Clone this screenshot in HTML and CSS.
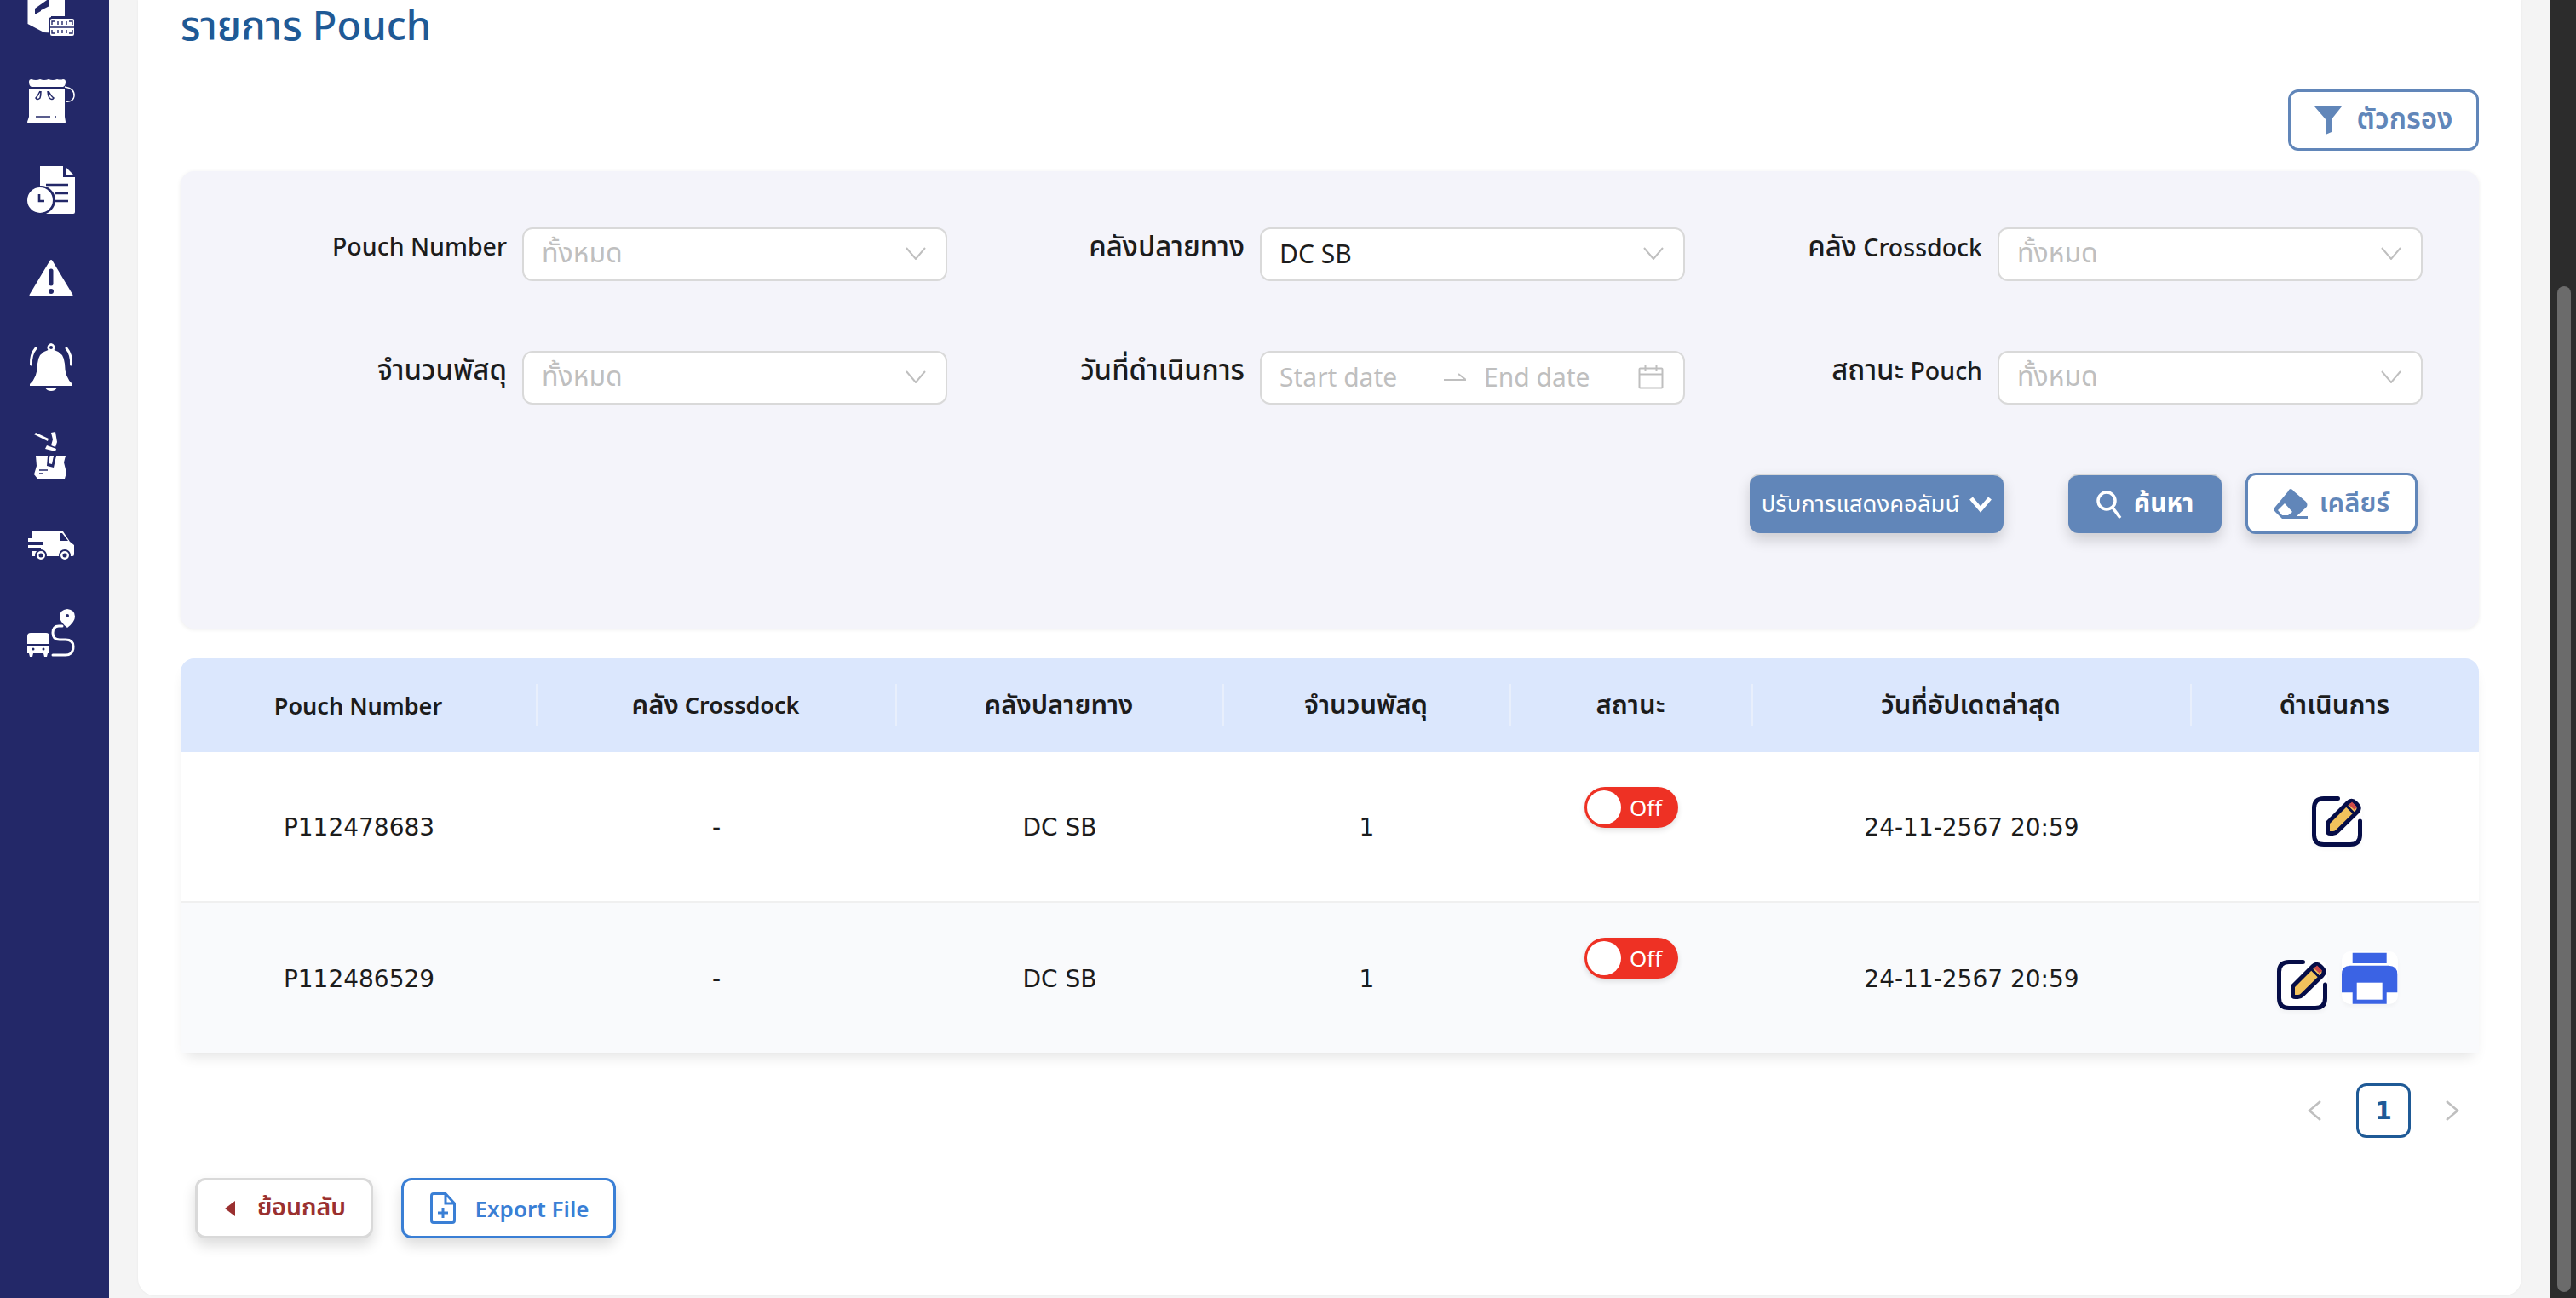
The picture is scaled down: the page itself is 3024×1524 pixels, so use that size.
FILE: index.html
```html
<!DOCTYPE html>
<html lang="th">

<head>
  <meta charset="UTF-8">
  <title>รายการ Pouch</title>
  <link rel="stylesheet" href="styles.css">
</head>

<body>
  <div class="app">
    <nav class="sidebar">
      <ul class="side-list">
        <li class="side-item">
          <svg class="side-icon" viewBox="0 0 60 60">
            <path fill="#fff" d="M2.500 0H46V34H30V53.500L21.600 53L2.500 43Z" />
            <path fill="#232868" d="M28 13L11 25V32L18 28V27L28 22Z" />
            <rect x="28" y="36" width="30" height="22" rx="3" fill="#fff" stroke="#232868" stroke-width="2" />
            <path fill="none" stroke="#232868" stroke-width="1.400" d="M31 44V40H35M55 44V40H51M31 50V54H35M55 50V54H51M38 44V40M43 44V40M48 44V40M38 50V54M43 50V54M48 50V54" />
            <path stroke="#232868" stroke-width="1.500" d="M29 47H57" />
          </svg>
        </li>
        <li class="side-item">
          <svg class="side-icon" viewBox="0 0 60 60">
            <path fill="#fff" d="M4 7Q4 4 7 4Q12 6 17 4Q22 6 27 4Q32 6 37 4Q41 5 44 4Q47 4 47 7Q47 12 44 13H7Q4 12 4 7Z" />
            <path fill="#fff" d="M4 15H46V48L47 54Q47 56 44 56H5Q2 56 2 54L4 48Z" />
            <path fill="none" stroke="#232868" stroke-width="1.500" d="M17 18Q14 24 12 26Q14 29 17 26Q18 23 18 18M27 18Q30 24 33 26Q31 29 28 26Q26 23 26 18" />
            <path stroke="#232868" stroke-width="1.500" d="M12 48H29M34 48H36" />
            <path fill="none" stroke="#fff" stroke-width="1.500" d="M46 13Q58 15 57 24Q56 31 47 30" />
          </svg>
        </li>
        <li class="side-item">
          <svg class="side-icon" viewBox="0 0 60 60">
            <path fill="#fff" d="M17 2H44V15H58V56Q58 58 56 58H17Z" />
            <path fill="#fff" d="M47 3L57 13H47Z" />
            <path stroke="#232868" stroke-width="2.600" d="M24 24H50M34 34H50M34 43H50" />
            <circle cx="18" cy="42" r="17" fill="#232868" />
            <circle cx="17" cy="42" r="15" fill="#fff" />
            <path fill="none" stroke="#232868" stroke-width="2.600" d="M16 35V43H22" />
          </svg>
        </li>
        <li class="side-item">
          <svg class="side-icon" viewBox="0 0 60 60">
            <path fill="#fff" stroke="#fff" stroke-width="3" stroke-linejoin="round" d="M30 9.500L6 49.500H54Z" />
            <path stroke="#232868" stroke-width="5" stroke-linecap="round" d="M30 21V36" />
            <circle cx="30" cy="45" r="3" fill="#232868" />
          </svg>
        </li>
        <li class="side-item">
          <svg class="side-icon" viewBox="0 0 60 60">
            <path fill="#fff" d="M30 2A5 5 0 0 1 33.500 10Q45 13 46 26Q46 42 55 50V52H5V50Q14 42 14 26Q15 13 26.500 10A5 5 0 0 1 30 2Z" />
            <circle cx="30" cy="7" r="2" fill="#232868" />
            <path fill="#fff" d="M23 54H37Q35 58 30 58Q25 58 23 54Z" />
            <path fill="none" stroke="#fff" stroke-width="3" stroke-linecap="round" d="M12 8Q6 15 6.500 27M48 8Q54 15 53.500 27" />
          </svg>
        </li>
        <li class="side-item">
          <svg class="side-icon" viewBox="0 0 60 60">
            <path fill="#fff" d="M10 5L12 3L27 10L26 13Z" />
            <path fill="#fff" d="M30 3L35 2L37 14L35 20L30 18L32 11Z" />
            <path fill="#fff" d="M25 18L36 22L35 25L23 22Z" />
            <path fill="#fff" d="M12 30H47L45 38L48 50L46 57H14L10 52L13 42Z" />
            <path fill="#232868" d="M26 30H36L33 44L25 42Z" />
            <path fill="#fff" d="M28.500 30H33L31 40L27 39Z" />
            <path stroke="#232868" stroke-width="1.400" d="M16 47H26M16 51H21" />
          </svg>
        </li>
        <li class="side-item">
          <svg class="side-icon" viewBox="0 0 60 60">
            <path fill="#fff" d="M8 14H40L41 15H44L52 27L57 31V42Q57 44 55 44H8V38H18V34H3V31H20V27H3V23H8Z" />
            <path fill="#232868" d="M43 17H41V26H50Z" />
            <circle cx="18" cy="43" r="6" fill="#fff" stroke="#232868" stroke-width="2" />
            <circle cx="46" cy="43" r="6" fill="#fff" stroke="#232868" stroke-width="2" />
            <circle cx="18" cy="43" r="2.500" fill="#232868" />
            <circle cx="46" cy="43" r="2.500" fill="#232868" />
          </svg>
        </li>
        <li class="side-item">
          <svg class="side-icon" viewBox="0 0 60 60">
            <path fill="#fff" d="M49 2Q58 3 58 11Q58 17 49 24Q40 17 40 11Q40 3 49 2Z" />
            <circle cx="49" cy="10" r="2" fill="#232868" />
            <path fill="#fff" d="M2 34Q2 30 6 30H24Q28 30 28 34V43H2ZM2 45H28V54H26L25 58H22L21 54H9L8 58H5L4 54H2Z" />
            <circle cx="9" cy="49" r="1.500" fill="#232868" />
            <circle cx="21" cy="49" r="1.500" fill="#232868" />
            <path fill="none" stroke="#fff" stroke-width="3" stroke-linecap="round" d="M43 22H39Q32 22 32 30Q32 38 40 38H47Q56 38 56 46Q56 56 47 56H32" />
          </svg>
        </li>
      </ul>
    </nav>

    <main class="main">
      <section class="card">
        <h1 class="title">รายการ Pouch</h1>

        <div class="filter-bar">
          <button class="btn btn-outline btn-filter">
            <svg class="btn-icon" width="32" height="33" viewBox="0 0 32 33">
              <path fill="currentColor" d="M0 0H32L20 15V30L13 33V15Z" />
            </svg>
            ตัวกรอง
          </button>
        </div>

        <div class="panel">
          <div class="fields">
            <div class="field">
              <label class="field-label">Pouch Number</label>
              <div class="select placeholder">
                <span class="th">ทั้งหมด</span>
                <svg class="caret" width="24" height="15" viewBox="0 0 24 15"><path d="M1 1L12 14L23 1" /></svg>
              </div>
            </div>
            <div class="field">
              <label class="field-label"><span class="th">คลังปลายทาง</span></label>
              <div class="select">
                <span>DC SB</span>
                <svg class="caret" width="24" height="15" viewBox="0 0 24 15"><path d="M1 1L12 14L23 1" /></svg>
              </div>
            </div>
            <div class="field">
              <label class="field-label"><span class="th">คลัง</span> Crossdock</label>
              <div class="select placeholder">
                <span class="th">ทั้งหมด</span>
                <svg class="caret" width="24" height="15" viewBox="0 0 24 15"><path d="M1 1L12 14L23 1" /></svg>
              </div>
            </div>
            <div class="field">
              <label class="field-label"><span class="th">จำนวนพัสดุ</span></label>
              <div class="select placeholder">
                <span class="th">ทั้งหมด</span>
                <svg class="caret" width="24" height="15" viewBox="0 0 24 15"><path d="M1 1L12 14L23 1" /></svg>
              </div>
            </div>
            <div class="field">
              <label class="field-label"><span class="th">วันที่ดำเนินการ</span></label>
              <div class="select placeholder date-range">
                <span class="date-from">Start date</span>
                <svg class="date-arrow" width="26" height="12" viewBox="0 0 26 12"><path d="M0 9H26M17 2L26 9" /></svg>
                <span class="date-to">End date</span>
                <svg class="date-cal" width="30" height="28" viewBox="0 0 30 28">
                  <rect x="1.500" y="3.500" width="27" height="23" rx="1" />
                  <path d="M1.500 10.500H28.500M8.500 0V7M21.500 0V7" />
                </svg>
              </div>
            </div>
            <div class="field">
              <label class="field-label"><span class="th">สถานะ</span> Pouch</label>
              <div class="select placeholder">
                <span class="th">ทั้งหมด</span>
                <svg class="caret" width="24" height="15" viewBox="0 0 24 15"><path d="M1 1L12 14L23 1" /></svg>
              </div>
            </div>
          </div>

          <div class="panel-actions">
            <button class="btn btn-solid btn-columns">
              ปรับการแสดงคอลัมน์
              <svg width="26" height="20" viewBox="0 0 26 20"><path fill="none" stroke="currentColor" stroke-width="5" d="M2 3L13 16L24 3" /></svg>
            </button>
            <button class="btn btn-solid btn-search">
              <svg width="30" height="33" viewBox="0 0 30 33"><circle cx="12" cy="12" r="10" fill="none" stroke="currentColor" stroke-width="3.500" /><path stroke="currentColor" stroke-width="3.500" d="M19 20L28 32" /></svg>
              ค้นหา
            </button>
            <button class="btn btn-outline btn-clear">
              <svg width="40" height="35" viewBox="0 0 40 35">
                <path fill="currentColor" d="M20 0Q22 0 24 3L38 15Q41 19 38 22L27 32H40V35H10L2 27Q-1 24 2 21L17 3Q18 0 20 0Z" />
                <path fill="#fff" d="M13 17L22 27L17 31H10L5 25Z" />
              </svg>
              เคลียร์
            </button>
          </div>
        </div>

        <table class="pouch-table">
          <colgroup>
            <col class="col-number">
            <col class="col-cross">
            <col class="col-dest">
            <col class="col-count">
            <col class="col-status">
            <col class="col-date">
            <col class="col-action">
          </colgroup>
          <thead>
            <tr>
              <th>Pouch Number</th>
              <th><span class="th">คลัง</span> Crossdock</th>
              <th><span class="th">คลังปลายทาง</span></th>
              <th><span class="th">จำนวนพัสดุ</span></th>
              <th><span class="th">สถานะ</span></th>
              <th><span class="th">วันที่อัปเดตล่าสุด</span></th>
              <th><span class="th">ดำเนินการ</span></th>
            </tr>
          </thead>
          <tbody>
            <tr>
              <td>P112478683</td>
              <td>-</td>
              <td>DC SB</td>
              <td>1</td>
              <td class="cell-status"><span class="switch"><i class="switch-knob"></i>Off</span></td>
              <td>24-11-2567 20:59</td>
              <td class="cell-action">
                <div class="action-wrap">
                  <span class="icon-tile">
                    <svg width="59" height="59" viewBox="0 0 59 59">
                      <path class="edit-frame" d="M30.500 2.500H14Q2.500 2.500 2.500 14V45Q2.500 56.500 14 56.500H45Q56.500 56.500 56.500 45V29" />
                      <path class="edit-pencil" d="M18.500 31L42 7.500Q46.500 3 51 7.500L53 9.500Q57.500 14 53 18.500L29.500 41.500Q27.500 43.500 24.500 43.500H21.500Q18.500 43.500 18.500 40.500Z" />
                      <path class="edit-band" d="M41 11.500L49.500 20" />
                      <path fill="#cf4a4a" d="M43.500 10L47 6.500L53 12.500L50 16Z" />
                    </svg>
                  </span>
                </div>
              </td>
            </tr>
            <tr>
              <td>P112486529</td>
              <td>-</td>
              <td>DC SB</td>
              <td>1</td>
              <td class="cell-status"><span class="switch"><i class="switch-knob"></i>Off</span></td>
              <td>24-11-2567 20:59</td>
              <td class="cell-action">
                <div class="action-wrap action-wrap-two">
                  <span class="icon-tile icon-tile-edit">
                    <svg width="59" height="59" viewBox="0 0 59 59">
                      <path class="edit-frame" d="M30.500 2.500H14Q2.500 2.500 2.500 14V45Q2.500 56.500 14 56.500H45Q56.500 56.500 56.500 45V29" />
                      <path class="edit-pencil" d="M18.500 31L42 7.500Q46.500 3 51 7.500L53 9.500Q57.500 14 53 18.500L29.500 41.500Q27.500 43.500 24.500 43.500H21.500Q18.500 43.500 18.500 40.500Z" />
                      <path class="edit-band" d="M41 11.500L49.500 20" />
                      <path fill="#cf4a4a" d="M43.500 10L47 6.500L53 12.500L50 16Z" />
                    </svg>
                  </span>
                  <span class="icon-tile">
                    <svg width="66" height="62" viewBox="0 0 66 62">
                      <path fill="#3b63e4" d="M12.700 1.700H52.700V14H12.700Z" />
                      <path fill="#3b63e4" d="M10 16.700H55Q65.300 16.700 65.300 27V48.300H52.700V61.700H12.700V48.300H0V27Q0 16.700 10 16.700Z" />
                      <path fill="#fff" d="M17.700 36.700H47.700V56.700H17.700Z" />
                    </svg>
                  </span>
                </div>
              </td>
            </tr>
          </tbody>
        </table>

        <div class="pager">
          <svg class="pager-arrow" width="16" height="24" viewBox="0 0 16 24"><path d="M15 1L2 12L15 23" /></svg>
          <span class="pager-num">1</span>
          <svg class="pager-arrow" width="16" height="24" viewBox="0 0 16 24"><path d="M1 1L14 12L1 23" /></svg>
        </div>

        <div class="foot-actions">
          <button class="btn btn-back">
            <svg width="12" height="18" viewBox="0 0 12 18"><path fill="currentColor" d="M12 0V18L0 9Z" /></svg>
            <span class="th">ย้อนกลับ</span>
          </button>
          <button class="btn btn-export">
            <svg width="30" height="37" viewBox="0 0 30 37">
              <path fill="none" stroke="currentColor" stroke-width="3" stroke-linejoin="round" d="M4 1.500H18L28.500 13V33Q28.500 35.500 26 35.500H4Q1.500 35.500 1.500 33V4Q1.500 1.500 4 1.500Z" />
              <path fill="none" stroke="currentColor" stroke-width="3" d="M18 2V13H28M15 18V30M9 24H21" />
            </svg>
            Export File
          </button>
        </div>
      </section>
    </main>

    <div class="scroll-track">
      <div class="scroll-thumb"></div>
    </div>
  </div>
</body>

</html>
```

FILE: styles.css
```css
* {
  padding: 0;
  margin: 0;
  box-sizing: border-box;
}

body {
  font-family: "Noto Sans", "Noto Sans Thai", "DejaVu Sans", sans-serif;
  color: #1c1c1c;
  background: #f4f4f4;
}

.app {
  display: flex;
  height: 1524px;
  overflow: hidden;
}

/* sidebar, scrolled so the first icon is cut off */
.sidebar {
  flex: 0 0 128px;
  background: #232868;
  overflow: hidden;
}

.side-list {
  list-style: none;
  margin-top: -37px;
}

.side-item {
  display: flex;
  align-items: center;
  justify-content: center;
  height: 104px;
  padding-right: 8px;
}

.side-icon {
  width: 60px;
  height: 60px;
}

.main {
  flex: 1;
  padding: 0 34px 3px;
  background: #f4f4f4;
}

.card {
  height: 100%;
  padding: 0 50px;
  background: #fff;
  border-radius: 0 0 20px 20px;
  box-shadow: 0 0 3px rgba(0, 0, 0, .05);
}

.title {
  height: 50px;
  font-size: 47px;
  line-height: 58px;
  font-weight: 500;
  color: #1f5a96;
}

.filter-bar {
  display: flex;
  justify-content: flex-end;
  margin-top: 55px;
}

/* buttons */
.btn {
  display: inline-flex;
  align-items: center;
  justify-content: center;
  font-family: inherit;
  font-size: 30px;
  font-weight: 600;
  border-radius: 12px;
  cursor: pointer;
}

.btn-outline {
  color: #6186b9;
  background: #fff;
  border: 3px solid #6186b9;
}

.btn-solid {
  color: #fff;
  background: #6186b9;
  border: 0;
  border-top: 2px solid #d9d9d9;
}

.btn-filter {
  width: 224px;
  height: 72px;
  gap: 18px;
  font-size: 33px;
}

.panel {
  height: 537px;
  margin-top: 24px;
  padding: 66px 0 0 34px;
  background: #f4f4fa;
  border-radius: 16px;
  box-shadow: 0 1px 5px rgba(0, 0, 0, .08);
}

.fields {
  display: grid;
  grid-template-columns: repeat(3, 866px);
  row-gap: 82px;
}

.field {
  display: flex;
  gap: 18px;
}

.field-label {
  flex: 1;
  text-align: right;
  font-size: 28.500px;
  font-weight: 500;
  line-height: 44px;
}

.field-label .th {
  font-size: 33px;
}

.select {
  display: flex;
  align-items: center;
  justify-content: space-between;
  flex: 0 0 499px;
  height: 63px;
  padding: 0 23px 2px 21px;
  font-size: 30px;
  background: #fff;
  border: 2px solid #d9d9d9;
  border-radius: 12px;
}

.select .th {
  font-size: 32px;
}

.placeholder {
  color: #bfbfbf;
}

.caret path {
  fill: none;
  stroke: #bfbfbf;
  stroke-width: 2;
}

.date-range {
  justify-content: flex-start;
}

.date-from {
  width: 193px;
}

.date-arrow {
  margin-right: 21px;
}

.date-arrow path,
.date-cal rect,
.date-cal path {
  fill: none;
  stroke: #bfbfbf;
  stroke-width: 2;
}

.date-cal {
  margin-left: auto;
  margin-right: 0;
}

.panel-actions {
  display: flex;
  justify-content: flex-end;
  margin-top: 80px;
  padding-right: 72px;
}

.panel-actions .btn {
  box-shadow: 0 8px 16px rgba(0, 0, 0, .16);
}

.btn-columns {
  width: 298px;
  height: 70px;
  margin-top: 1px;
  gap: 12px;
  font-size: 27.500px;
  font-weight: 400;
}

.btn-search {
  width: 180px;
  height: 70px;
  margin-top: 1px;
  margin-left: 76px;
  gap: 14px;
  font-weight: 700;
}

.btn-clear {
  width: 202px;
  height: 72px;
  margin-left: 28px;
  gap: 14px;
  font-size: 31px;
}

/* table */
.pouch-table {
  width: 2698px;
  margin-top: 35px;
  border-collapse: separate;
  border-spacing: 0;
  table-layout: fixed;
  box-shadow: 0 10px 16px -6px rgba(0, 0, 0, .12);
  border-radius: 16px 16px 0 0;
}

.col-number { width: 417px; }
.col-cross { width: 422px; }
.col-dest { width: 384px; }
.col-count { width: 337px; }
.col-status { width: 284px; }
.col-date { width: 515px; }
.col-action { width: 339px; }

.pouch-table th {
  position: relative;
  height: 110px;
  font-size: 27px;
  font-weight: 600;
  background: #dbe7fd;
}

.pouch-table th .th {
  font-size: 31px;
}

.pouch-table th:first-child {
  border-top-left-radius: 16px;
}

.pouch-table th:last-child {
  border-top-right-radius: 16px;
}

.pouch-table th + th::before {
  content: "";
  position: absolute;
  left: 0;
  top: 30px;
  height: 49px;
  border-left: 2px solid #e8effc;
}

.pouch-table td {
  height: 177px;
  padding: 2px 0 0 2px;
  font-size: 28px;
  font-family: "DejaVu Sans", sans-serif;
  text-align: center;
  background: #fff;
  border-bottom: 2px solid #f0f0f0;
}

.pouch-table tbody tr:last-child td {
  height: 176px;
  background: #f9fafc;
  border-bottom: 0;
}

.pouch-table .cell-status {
  vertical-align: top;
  padding: 41px 0 0 2px;
}

.switch {
  display: inline-flex;
  align-items: center;
  gap: 10px;
  width: 110px;
  height: 48px;
  padding-left: 3px;
  font-family: "Noto Sans", sans-serif;
  font-size: 26px;
  color: #fff;
  background: #ee3124;
  border-radius: 24px;
  box-shadow: 0 3px 6px rgba(0, 0, 0, .12);
}

.switch-knob {
  width: 40px;
  height: 40px;
  background: #fff;
  border-radius: 50%;
}

.pouch-table .cell-action {
  vertical-align: top;
  padding: 0;
}

.action-wrap {
  display: flex;
  align-items: flex-start;
  justify-content: center;
  gap: 17px;
  padding: 52px 0 0 6px;
}

.action-wrap-two {
  padding-top: 57px;
}

.icon-tile {
  display: inline-flex;
  background: #fff;
  border-radius: 10px;
  box-shadow: 0 3px 4px rgba(0, 0, 0, .03);
}

.icon-tile-edit {
  margin-top: 10px;
}

.edit-frame {
  fill: none;
  stroke: #060d47;
  stroke-width: 5;
  stroke-linecap: round;
}

.edit-pencil {
  fill: #f2c25c;
  stroke: #060d47;
  stroke-width: 5;
  stroke-linejoin: round;
}

.edit-band {
  stroke: #060d47;
  stroke-width: 3;
}

/* pagination */
.pager {
  display: flex;
  align-items: center;
  justify-content: flex-end;
  gap: 41px;
  margin-top: 36px;
  padding-right: 23px;
}

.pager-arrow path {
  fill: none;
  stroke: #bfbfbf;
  stroke-width: 2.500;
}

.pager-num {
  display: flex;
  align-items: center;
  justify-content: center;
  width: 64px;
  height: 64px;
  font-family: "DejaVu Sans", sans-serif;
  font-size: 28px;
  font-weight: 700;
  color: #1f5a96;
  border: 3px solid #1f5a96;
  border-radius: 12px;
}

.foot-actions {
  display: flex;
  gap: 33px;
  margin-top: 47px;
  padding-left: 17px;
}

.foot-actions .btn {
  height: 71px;
  font-size: 26px;
  background: #fff;
  box-shadow: 0 8px 16px rgba(0, 0, 0, .14);
}

.foot-actions .th {
  font-size: 28.500px;
}

.btn-back {
  width: 209px;
  gap: 26px;
  padding-left: 3px;
  color: #9a3030;
  border: 3px solid #d9d9d9;
}

.btn-export {
  width: 252px;
  gap: 23px;
  padding-left: 2px;
  color: #3a7fd5;
  border: 3px solid #3a7fd5;
}

.scroll-track {
  flex: 0 0 30px;
  padding: 336px 6px 7px 8px;
  background: #2c2c2c;
}

.scroll-thumb {
  height: 100%;
  background: #6b6b6b;
  border-radius: 8px;
}
```
